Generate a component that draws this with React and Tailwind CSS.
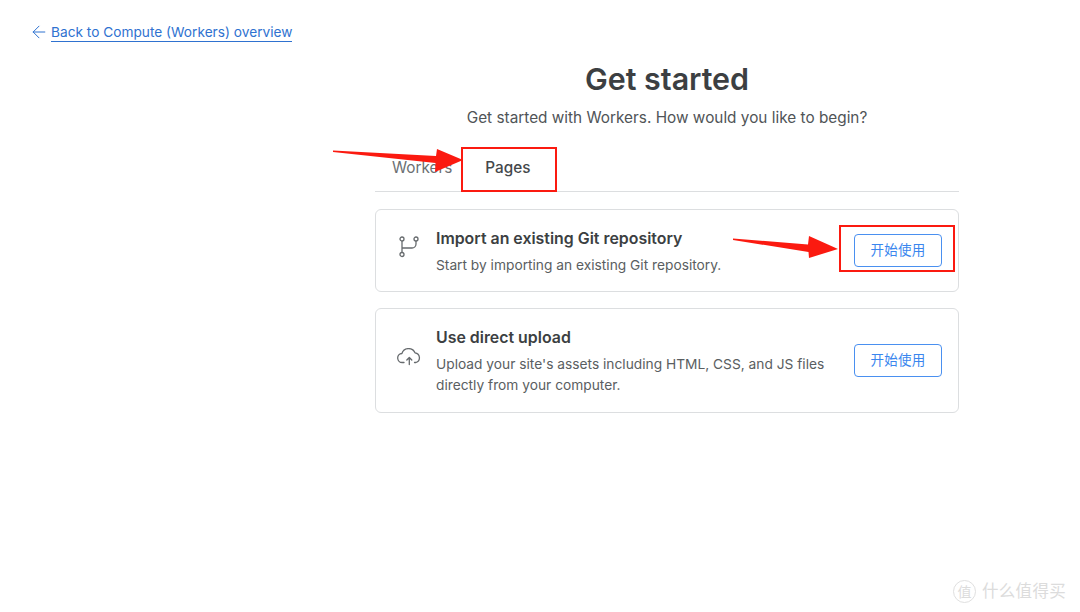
import React from 'react';
import { ArrowLeft } from 'lucide-react';

const FONT = 'font-["Inter","Noto_Sans_CJK_SC",sans-serif]';

function BranchIcon() {
  return (
    <svg width="20" height="22" viewBox="0 0 20 22" fill="none" stroke="#666a6d" strokeWidth="1.3">
      <circle cx="3" cy="3" r="2" />
      <circle cx="3" cy="18.5" r="2" />
      <circle cx="17" cy="3" r="2" />
      <path d="M3 5v11.5M3 12h10a4 4 0 0 0 4-4V5" />
    </svg>
  );
}

function CloudIcon() {
  return (
    <svg width="25" height="18" viewBox="0 0 25 18" fill="none" stroke="#666a6d" strokeWidth="1.3" strokeLinecap="round" strokeLinejoin="round">
      <path d="M7 14.5H5.5a4.5 4.5 0 0 1-.6-9A7 7 0 0 1 18 4.8a5 5 0 0 1 1 9.7h-1.5" />
      <path d="M12.3 16.5V9.5M9.8 12l2.5-2.5 2.5 2.5" />
    </svg>
  );
}

function Card({ icon, title, children, height }) {
  return (
    <div className={`flex items-center rounded-md border border-[#dcdee0] bg-white pl-[20px] pr-4 ${height}`}>
      <div className="mb-[8px] flex w-[40px] shrink-0 items-center">{icon}</div>
      <div className="flex-1 pt-[2px]">
        <div className="text-[15.9px] leading-[22px] font-semibold text-[#3c3f42]">{title}</div>
        <div className="mt-[5px] text-[13.75px] leading-[21px] text-[#5a5e61]">{children}</div>
      </div>
      <button className="h-[33px] w-[88px] rounded-[4px] border border-[#4a90f0] bg-white text-[13.5px] tracking-[0.3px] text-[#3a86ee]">
        开始使用
      </button>
    </div>
  );
}

export default function App() {
  return (
    <div className={`relative h-[612px] w-[1080px] overflow-hidden bg-white ${FONT}`}>
      <div className="flex items-center pl-[29px] pt-[22px] text-[#2f72d0]">
        <ArrowLeft size={20} strokeWidth={1.2} className="mr-[2px]" />
        <a className="border-b border-[#2f72d0] text-[13.7px] leading-[18px]">Back to Compute (Workers) overview</a>
      </div>

      <main className="ml-[375px] w-[584px]">
        <h1 className="mt-[19px] text-center text-[30.4px] leading-[36px] font-semibold text-[#3c3f42]">Get started</h1>
        <p className="mt-[10px] text-center text-[15.35px] leading-[22px] text-[#505457]">
          Get started with Workers. How would you like to begin?
        </p>

        {/* tabs */}
        <div className="mt-[19px] flex h-[44px] border-b border-[#dcdee0] text-[15.3px]">
          <div className="flex items-center pb-[2px] pl-[17px] pr-[17px] text-[#6b6f72]">Workers</div>
          <div className="-mb-px flex items-center border-b-2 border-[#3d4a8a] px-4 pb-[2px] font-medium text-[#44484b]">Pages</div>
        </div>

        <div className="mt-[17px] flex flex-col gap-[16px]">
          <Card icon={<div className="pl-[3px]"><BranchIcon /></div>} title="Import an existing Git repository" height="h-[83px]">
            Start by importing an existing Git repository.
          </Card>
          <Card icon={<div className="pl-[1px]"><CloudIcon /></div>} title="Use direct upload" height="h-[105px]">
            Upload your site's assets including HTML, CSS, and JS files
            <br />
            directly from your computer.
          </Card>
        </div>
      </main>

      {/* red annotations */}
      <div className="absolute left-[461px] top-[147px] h-[45px] w-[96px] border-2 border-[#fb1a10]" />
      <div className="absolute left-[839px] top-[225px] h-[47px] w-[116px] border-2 border-[#fb1a10]" />
      <svg className="absolute left-0 top-0" width="1080" height="612" fill="#fb1a10">
        <path d="M333 150.5 L436 156 L437 149 L463 160 L435 172 L435.5 163 L333 152 Z" />
        <path d="M733 238.5 L808 244.5 L809 236 L838 249 L809 258 L808.5 252 L733 240 Z" />
      </svg>

      {/* watermark */}
      <div className="absolute left-[953px] top-[579px] flex items-center text-[#dcdcdc]">
        <div className="flex h-[23px] w-[23px] items-center justify-center rounded-full border border-[#e0e0e0] text-[14px]">值</div>
        <span className="ml-[6px] text-[16.5px] tracking-[0.3px]">什么值得买</span>
      </div>
    </div>
  );
}
